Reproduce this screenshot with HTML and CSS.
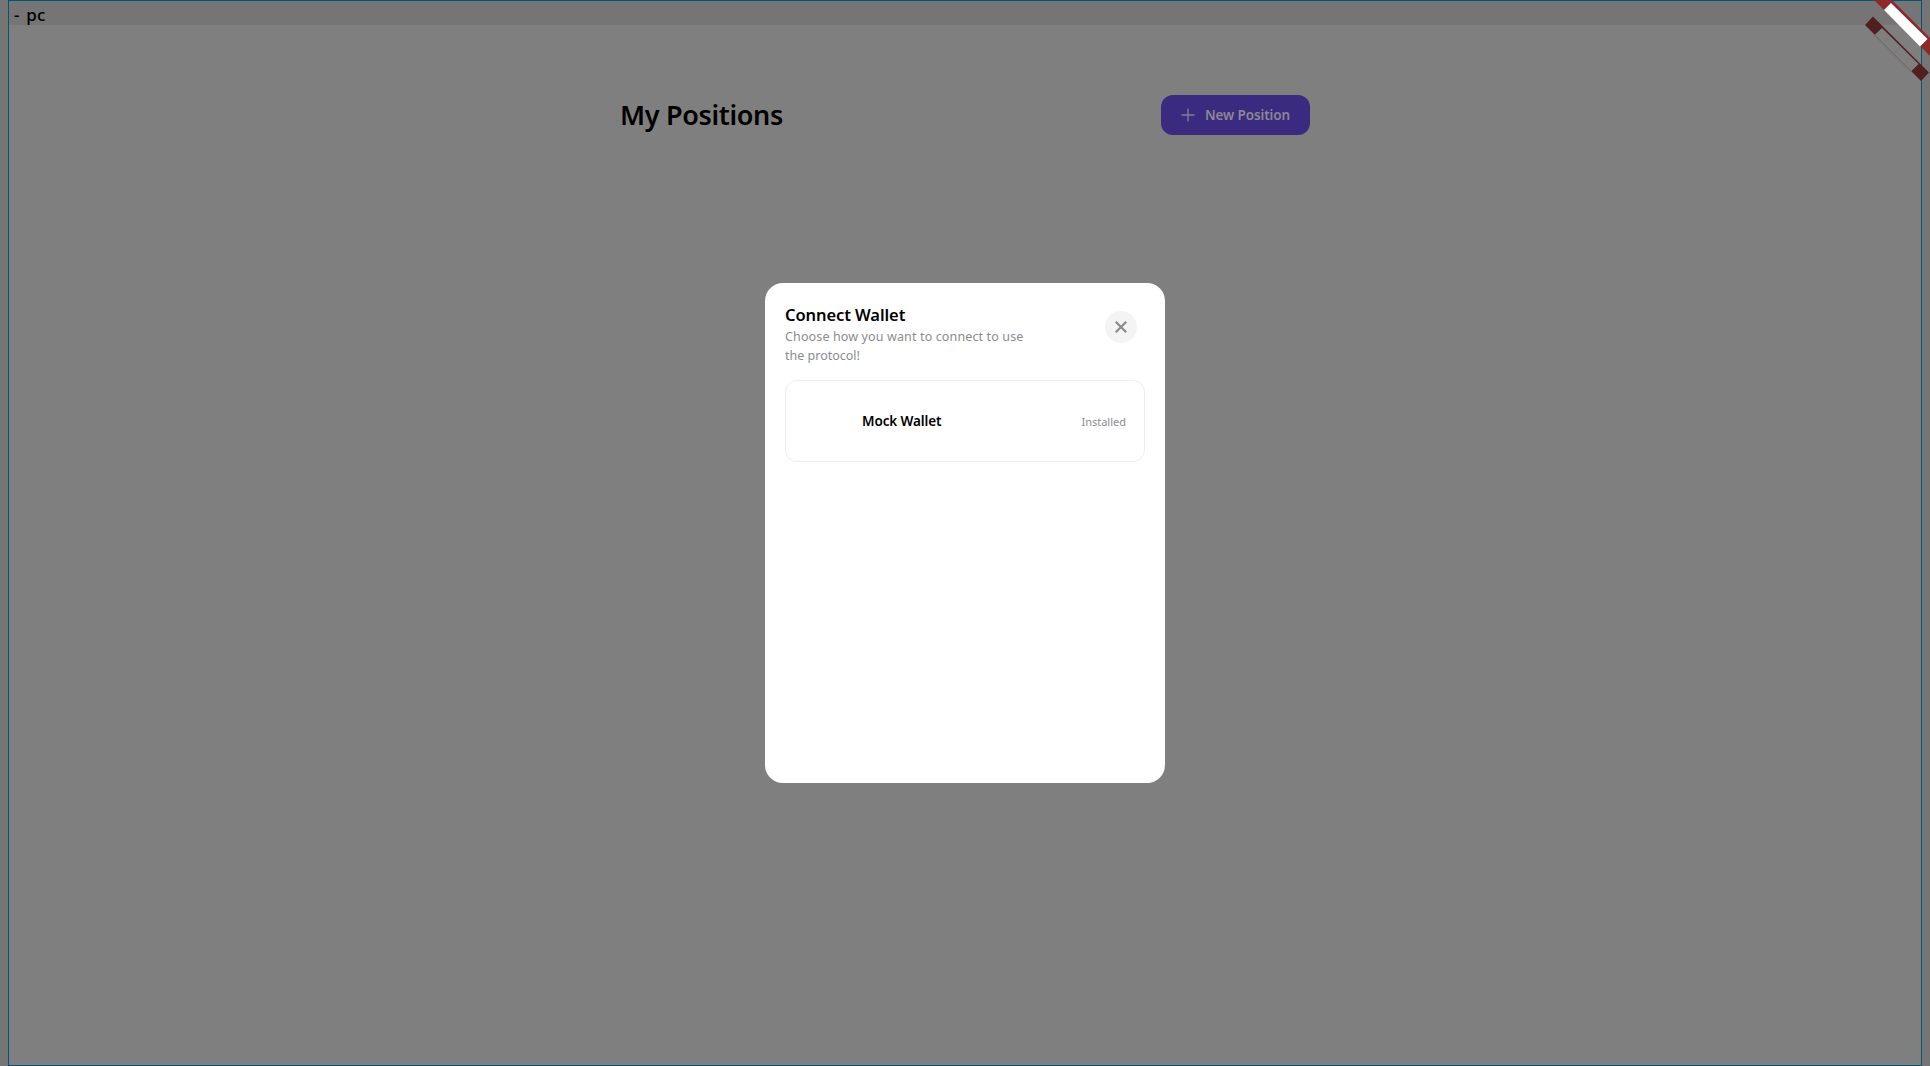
FILE: index.html
```html
<!DOCTYPE html>
<html lang="en">
<head>
<meta charset="utf-8">
<title>My Positions</title>
<link rel="stylesheet" href="styles.css">
</head>
<body>
<div class="frame">
  <header class="platform-bar"><span>- pc</span></header>
  <main class="positions">
    <h1>My Positions</h1>
    <button class="new-position">
      <svg width="14" height="14" viewBox="0 0 14 14"><path d="M7 .5v13M.5 7h13"/></svg>
      <span>New Position</span>
    </button>
  </main>
</div>
<div class="overlay">
  <section class="modal">
    <header class="modal-head">
      <div>
        <h2>Connect Wallet</h2>
        <p>Choose how you want to connect to use<br><span class="last-line">the protocol!</span></p>
      </div>
      <button class="close" aria-label="Close">
        <svg width="12" height="12" viewBox="0 0 12 12"><path d="M.7.7l10.6 10.6M11.3.7L.7 11.3"/></svg>
      </button>
    </header>
    <div class="wallet">
      <strong>Mock Wallet</strong>
      <small>Installed</small>
    </div>
  </section>
</div>
<svg class="ribbons" width="70" height="86" viewBox="0 0 70 86">
  <path fill="#8b292b" d="M14 0h18l38 38v18z"/>
  <path fill="#fff" d="M31 3l36.500 36-7.500 7.500L24 10z"/>
  <path fill="#521f21" d="M13 16.500L69 72.500l-8 8.500L5 25z"/>
  <path fill="#7f7f7f" d="M22 28l36.500 36-7.500 7.500L14.500 35z"/>
  <path stroke="#716262" fill="none" d="M14.500 35l36.500 36.500"/>
  <path stroke="#777474" stroke-width=".6" fill="none" d="M23 43l7-7M34 53l7-7M44 64l7-7"/>
</svg>
</body>
</html>
```
FILE: styles.css
```css
* { box-sizing: border-box; }
body {
  margin: 0;
  height: 1066px;
  padding: 0 8px;
  background: #757575;
  font-family: "Noto Sans", "Open Sans", sans-serif;
  color: #000;
  overflow: hidden;
}
h1, h2, p { margin: 0; }
button { border: 0; padding: 0; font: inherit; }
svg { display: block; fill: none; }
.frame {
  height: 1066px;
  border: 1px solid #075378;
  background: #7f7f7f;
}
.platform-bar {
  height: 24px;
  padding-left: 5px;
  background: #757575;
  font-size: 17px;
  font-weight: 500;
  letter-spacing: .4px;
  word-spacing: 1.5px;
  line-height: 27px;
}
.positions {
  display: flex;
  justify-content: space-between;
  align-items: center;
  width: 690px;
  height: 40px;
  margin: 70px auto 0;
}
h1 {
  font-size: 27px;
  font-weight: 600;
  letter-spacing: -.33px;
  line-height: 40px;
  white-space: nowrap;
}
.new-position {
  display: flex;
  align-items: center;
  width: 149px;
  height: 40px;
  padding-left: 20px;
  gap: 10px;
  border-radius: 12px;
  background: #3a2b80;
  color: #8b8794;
  font-size: 13.5px;
  font-weight: 600;
  letter-spacing: -.12px;
  white-space: nowrap;
}
.new-position path { stroke: #85808f; stroke-width: 1.3; }
.overlay {
  position: absolute;
  inset: 0;
  display: flex;
  align-items: center;
  justify-content: center;
}
.modal {
  width: 400px;
  height: 500px;
  padding: 20px;
  border-radius: 18px;
  background: #fff;
}
.modal-head { display: flex; justify-content: space-between; height: 77px; }
.modal-head div { white-space: nowrap; }
h2 { font-size: 16.5px; font-weight: 600; letter-spacing: -.08px; line-height: 24px; }
.modal-head p { color: #8b8c90; font-size: 12.5px; letter-spacing: .13px; line-height: 19px; }
.modal-head .last-line { letter-spacing: 0; }
.close {
  display: grid;
  place-items: center;
  width: 32px;
  height: 32px;
  margin: 8px 8px 0 0;
  border-radius: 50%;
  background: #f4f4f4;
}
.close path { stroke: #8b8c90; stroke-width: 2.2; }
.wallet {
  display: flex;
  justify-content: space-between;
  align-items: center;
  height: 82px;
  padding: 0 18px 0 76px;
  border: 1px solid #eee;
  border-radius: 12px;
}
.wallet strong { font-size: 13.5px; font-weight: 600; letter-spacing: -.12px; }
.wallet small { color: #8b8c90; font-size: 11px; }
.ribbons { position: absolute; top: 0; right: 0; }
```
